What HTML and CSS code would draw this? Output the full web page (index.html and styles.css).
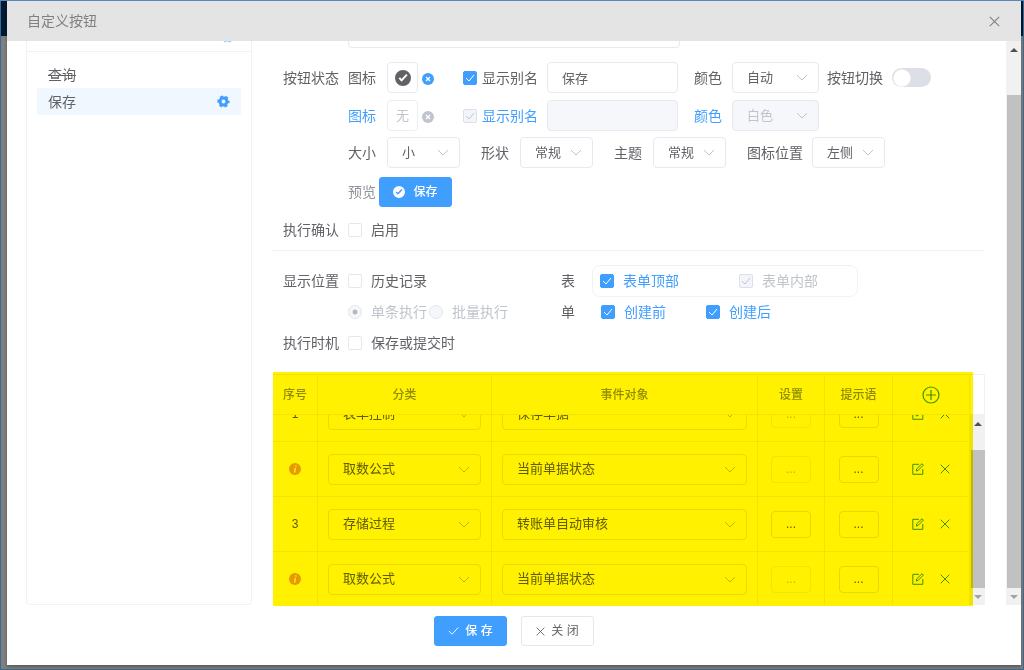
FILE: index.html
```
<!DOCTYPE html>
<html lang="zh-CN">
<head>
<meta charset="utf-8">
<title>自定义按钮</title>
<link rel="stylesheet" href="styles.css">
</head>
<body>
<svg class="defs" aria-hidden="true">
  <symbol id="gear" viewBox="0 0 14 14"><g fill="none" stroke="currentColor"><circle cx="7" cy="7" r="3.700" stroke-width="3.200"/><circle cx="7" cy="7" r="5.700" stroke-width="1.800" stroke-dasharray="3.400 2.570" stroke-dashoffset="1.700"/></g></symbol>
  <symbol id="ok" viewBox="0 0 16 16"><path fill-rule="evenodd" d="M8 0a8 8 0 1 1 0 16A8 8 0 0 1 8 0zM3.600 8.500l3 3.200 6-6.500-1.400-1.200-4.700 5.100-1.500-1.800z"/></symbol>
  <symbol id="clear" viewBox="0 0 12 12"><circle cx="6" cy="6" r="6"/><path d="M4 4l4 4M8 4l-4 4" stroke="#fff" stroke-width="1.300"/></symbol>
  <symbol id="cross" viewBox="0 0 10 10"><path d="M.7.7l8.600 8.600M9.300.7L.7 9.300" fill="none" stroke="currentColor" stroke-width="1"/></symbol>
  <symbol id="edit" viewBox="0 0 12 12"><path d="M7 1.300H.8v10h10V6M4.300 8l.5-2.200L10 .7l1.400 1.400-5.200 5.300z" fill="none" stroke="currentColor" stroke-width="1"/></symbol>
  <symbol id="info" viewBox="0 0 12 12"><circle cx="6" cy="6" r="6" fill="#e6a23c"/><path d="M6.400 4.800L5.500 9.500M7 2.400l-.2 1.200" stroke="#fff" stroke-width="1.500"/></symbol>
  <symbol id="up" viewBox="0 0 8 4"><path d="M0 4L4 0l4 4z"/></symbol>
  <symbol id="down" viewBox="0 0 8 4"><path d="M0 0l4 4 4-4z"/></symbol>
</svg>
<div class="backdrop-nav"></div>
<section class="dialog" role="dialog" aria-labelledby="title">
  <header class="dialog-head">
    <h1 id="title">自定义按钮</h1>
    <button class="icon-btn close" aria-label="关闭对话框"><svg><use href="#cross"/></svg></button>
  </header>

  <div class="dialog-body">
    <aside class="side">
      <div class="side-top"><svg class="gear"><use href="#gear"/></svg></div>
      <ul class="side-list">
        <li class="removed">查询</li>
        <li class="active">保存 <button class="icon-btn" aria-label="设置"><svg class="gear"><use href="#gear"/></svg></button></li>
      </ul>
    </aside>

    <main class="form">
      <div class="clipped"><input class="name" type="text" aria-label="名称"></div>

      <div class="row state">
        <span class="label">按钮状态</span>
        <span class="sub">图标</span>
        <button class="pick" aria-label="选择图标"><svg class="ok"><use href="#ok"/></svg></button>
        <button class="icon-btn clear" aria-label="清除图标"><svg><use href="#clear"/></svg></button>
        <label class="alias"><input type="checkbox" checked>显示别名</label>
        <input class="text" type="text" value="保存" aria-label="别名">
        <label class="sub color" for="color1">颜色</label>
        <select id="color1" class="wide"><option>自动</option></select>
        <label class="switch">按钮切换<input type="checkbox" role="switch"></label>
      </div>

      <div class="row second">
        <span class="label"></span>
        <span class="sub link">图标</span>
        <button class="pick" disabled>无</button>
        <button class="icon-btn clear" disabled aria-label="清除图标"><svg><use href="#clear"/></svg></button>
        <label class="alias link"><input type="checkbox" checked disabled>显示别名</label>
        <input class="text" type="text" disabled aria-label="切换后别名">
        <label class="sub color link" for="color2">颜色</label>
        <select id="color2" class="wide" disabled><option>白色</option></select>
      </div>

      <div class="row third">
        <span class="label"></span>
        <label class="pair"><span>大小</span><select><option>小</option></select></label>
        <label class="pair"><span>形状</span><select><option>常规</option></select></label>
        <label class="pair"><span>主题</span><select><option>常规</option></select></label>
        <label class="pair"><span>图标位置</span><select><option>左侧</option></select></label>
      </div>

      <div class="row preview">
        <span class="label"></span>
        <span class="muted">预览</span>
        <button class="btn primary"><svg class="ok-small"><use href="#ok"/></svg>保存</button>
      </div>

      <div class="row confirm">
        <span class="label">执行确认</span>
        <label class="check"><input type="checkbox">启用</label>
      </div>

      <hr>

      <div class="row place">
        <span class="label">显示位置</span>
        <div class="half"><label class="check"><input type="checkbox">历史记录</label></div>
        <span class="form-tag">表</span>
        <div class="options boxed">
          <label class="check link"><input type="checkbox" checked>表单顶部</label>
          <label class="check off"><input type="checkbox" checked disabled>表单内部</label>
        </div>
      </div>
      <div class="row modes">
        <span class="label"></span>
        <div class="half">
          <label class="check off"><input type="radio" name="mode" checked disabled>单条执行</label>
          <label class="check off"><input type="radio" name="mode" disabled>批量执行</label>
        </div>
        <span class="form-tag">单</span>
        <div class="options created">
          <label class="check link"><input type="checkbox" checked>创建前</label>
          <label class="check link"><input type="checkbox" checked>创建后</label>
        </div>
      </div>
      <div class="row timing">
        <span class="label">执行时机</span>
        <label class="check"><input type="checkbox">保存或提交时</label>
      </div>

      <div class="events">
        <table class="grid-head">
          <colgroup><col class="c1"><col class="c2"><col><col class="c4"><col class="c5"><col class="c6"><col class="c7"></colgroup>
          <thead><tr><th>序号</th><th>分类</th><th>事件对象</th><th>设置</th><th>提示语</th>
            <th><button class="icon-btn green" aria-label="添加"><svg class="plus" viewBox="0 0 18 18"><circle cx="9" cy="9" r="8"/><path d="M9 4v10M4 9h10"/></svg></button></th><th></th></tr></thead>
        </table>
        <div class="grid-body">
          <div class="viewport">
            <table class="scrolled">
              <colgroup><col class="c1"><col class="c2"><col><col class="c4"><col class="c5"><col class="c6"></colgroup>
              <tbody>
                <tr><td>1</td><td><select aria-label="分类"><option>表单控制</option></select></td><td><select aria-label="事件对象"><option>保存单据</option></select></td><td><button class="more" disabled>...</button></td><td><button class="more">...</button></td><td><div class="acts"><button class="icon-btn green" aria-label="编辑"><svg class="edit"><use href="#edit"/></svg></button><button class="icon-btn green" aria-label="删除"><svg class="del"><use href="#cross"/></svg></button></div></td></tr>
                <tr><td><svg class="info"><use href="#info"/></svg></td><td><select aria-label="分类"><option>取数公式</option></select></td><td><select aria-label="事件对象"><option>当前单据状态</option></select></td><td><button class="more" disabled>...</button></td><td><button class="more">...</button></td><td><div class="acts"><button class="icon-btn green" aria-label="编辑"><svg class="edit"><use href="#edit"/></svg></button><button class="icon-btn green" aria-label="删除"><svg class="del"><use href="#cross"/></svg></button></div></td></tr>
                <tr><td>3</td><td><select aria-label="分类"><option>存储过程</option></select></td><td><select aria-label="事件对象"><option>转账单自动审核</option></select></td><td><button class="more">...</button></td><td><button class="more">...</button></td><td><div class="acts"><button class="icon-btn green" aria-label="编辑"><svg class="edit"><use href="#edit"/></svg></button><button class="icon-btn green" aria-label="删除"><svg class="del"><use href="#cross"/></svg></button></div></td></tr>
                <tr><td><svg class="info"><use href="#info"/></svg></td><td><select aria-label="分类"><option>取数公式</option></select></td><td><select aria-label="事件对象"><option>当前单据状态</option></select></td><td><button class="more" disabled>...</button></td><td><button class="more">...</button></td><td><div class="acts"><button class="icon-btn green" aria-label="编辑"><svg class="edit"><use href="#edit"/></svg></button><button class="icon-btn green" aria-label="删除"><svg class="del"><use href="#cross"/></svg></button></div></td></tr>
              </tbody>
            </table>
          </div>
          <div class="scrollbar inner"><svg class="arrow"><use href="#up"/></svg><div class="thumb"></div><svg class="arrow dim"><use href="#down"/></svg></div>
        </div>
        <div class="marker"></div>
      </div>
    </main>

    <div class="scrollbar outer"><svg class="arrow"><use href="#up"/></svg><div class="thumb"></div><svg class="arrow dim"><use href="#down"/></svg></div>
  </div>

  <footer class="dialog-foot">
    <button class="btn primary"><svg class="tick" viewBox="0 0 12 10"><path d="M1 5l3.500 3.500L11.300 1"/></svg>保 存</button>
    <button class="btn"><svg class="x"><use href="#cross"/></svg>关 闭</button>
  </footer>
</section>
</body>
</html>
```

FILE: styles.css
```
* { box-sizing: border-box; }

body {
  margin: 0;
  height: 100vh;
  padding: 1px 3px 5px 7px;
  overflow: hidden;
  position: relative;
  background: #7f7f7f;
  box-shadow: inset 0 1px #5a8abf, inset 0 0 0 1px #3b6a97;
  color: #606266;
  font: 14px/20px "Liberation Sans", "Noto Sans CJK SC", sans-serif;
}

button, input, select { font: inherit; color: inherit; margin: 0; }
svg { display: block; fill: currentColor; flex: none; }
h1, ul { margin: 0; padding: 0; font-weight: normal; }
.defs { position: absolute; width: 0; height: 0; }

.backdrop-nav {
  position: absolute;
  left: 1px;
  top: 1px;
  right: 1px;
  height: 35px;
  background: #001a33;
}

.dialog {
  position: relative;
  display: flex;
  flex-direction: column;
  height: 100%;
  background: #fff;
  box-shadow: 0 2px 3px rgba(0, 0, 0, .3);
}
.dialog-head {
  display: flex;
  align-items: center;
  justify-content: space-between;
  height: 40px;
  flex: none;
  padding: 0 21px 0 20px;
  background: #e4e4e4;
  color: #808080;
}
.dialog-head h1 { font-size: 14px; }
.close svg { width: 11px; height: 11px; }

.dialog-body { display: flex; flex: 1; min-height: 0; padding-left: 19px; }
.dialog-foot { display: flex; flex: none; justify-content: center; gap: 14px; height: 60px; padding-top: 11px; }

/* controls */
.icon-btn { display: inline-flex; padding: 0; border: 0; background: none; }
.green { color: #409a30; }

.btn, .pick, .more, .text, .name, select {
  border: 1px solid #e7e9ee;
  border-radius: 4px;
  background-color: #fff;
}
.btn {
  display: inline-flex;
  align-items: center;
  justify-content: center;
  width: 73px;
  height: 30px;
  padding: 0;
  gap: 6px;
  border-color: #e4e7ed;
  border-radius: 3px;
  font-size: 12px;
}
.btn.primary { border-color: #409eff; background: #409eff; color: #fff; font-weight: 500; }
.preview .btn { gap: 8px; }
.tick { width: 11px; height: 10px; fill: none; stroke: currentColor; stroke-width: 1; }
.x { width: 9px; height: 9px; }
.ok { width: 16px; height: 16px; }
.ok-small { width: 12px; height: 12px; }

select {
  appearance: none;
  width: 73px;
  height: 31px;
  padding: 0 14px;
  font-size: 13px;
  background: #fff url("data:image/svg+xml,%3Csvg xmlns='http://www.w3.org/2000/svg' width='12' height='7'%3E%3Cpath d='M1 1l5 5 5-5' fill='none' stroke='%23c0c4cc'/%3E%3C/svg%3E") no-repeat right 10px center;
}
select:disabled, .text:disabled { background-color: #f5f7fa; color: #c0c4cc; opacity: 1; }
.text { width: 131px; height: 31px; padding: 0 14px; font-size: 13px; }

input[type=checkbox], input[type=radio] {
  appearance: none;
  flex: none;
  width: 14px;
  height: 14px;
  border: 1px solid #e4e7ed;
  border-radius: 2px;
  background: #fff center no-repeat;
}
input[type=checkbox]:checked {
  border-color: #409eff;
  background-color: #409eff;
  background-image: url("data:image/svg+xml,%3Csvg xmlns='http://www.w3.org/2000/svg' width='10' height='8'%3E%3Cpath d='M1 4l3 3 5-6' fill='none' stroke='white'/%3E%3C/svg%3E");
}
input[type=checkbox]:disabled {
  border-color: #dcdfe6;
  background-color: #f2f6fc;
  background-image: url("data:image/svg+xml,%3Csvg xmlns='http://www.w3.org/2000/svg' width='10' height='8'%3E%3Cpath d='M1 4l3 3 5-6' fill='none' stroke='%23c0c4cc'/%3E%3C/svg%3E");
}
input[type=radio] { border-color: #e4e7ed; border-radius: 50%; background-color: #f5f7fa; }
input[type=radio]:checked { background-image: radial-gradient(circle, #b4b8c0 2px, transparent 3px); }

/* side list */
.side {
  display: flex;
  flex-direction: column;
  flex: none;
  width: 226px;
  border: 1px solid #f0f2f6;
  border-top: 0;
  border-radius: 0 0 4px 4px;
}
.side-top { display: flex; justify-content: flex-end; align-items: flex-start; height: 11px; padding-right: 17px; overflow: hidden; border-bottom: 1px solid #f0f2f6; color: #8cc5ff; }
.side-top .gear { margin-top: -11px; }
.gear { width: 13px; height: 13px; }
.side-list { list-style: none; padding: 9px 10px; }
.side-list li { display: flex; align-items: center; justify-content: space-between; height: 27px; padding: 0 11px; }
.side-list .removed { text-decoration: line-through; }
.side-list .active { background: #f0f7ff; }
.side-list button { color: #409eff; }

/* form */
.form { flex: 1; min-width: 0; display: flex; flex-direction: column; margin: 0 21px 0 19px; }
.clipped { display: flex; flex: none; align-items: flex-end; height: 7px; margin-left: 77px; overflow: hidden; }
.name { flex: none; width: 332px; height: 31px; }
.row { display: flex; align-items: center; flex: none; padding-left: 12px; white-space: nowrap; }
.label { flex: none; width: 65px; }
.link { color: #409eff; }
.muted { width: 31px; color: #909399; }
.sub { width: 39px; }
.color { width: 38px; margin-left: 16px; }
.wide { width: 87px; }
.pick { display: flex; align-items: center; justify-content: center; width: 31px; height: 31px; padding: 0; font-size: 13px; }
.pick:disabled { border-color: #ebeef5; color: #c0c4cc; }
.clear { margin: 2px 29px 0 4px; color: #409eff; }
.clear svg { width: 12px; height: 12px; }
.clear:disabled { color: #c0c4cc; }
.alias { display: flex; align-items: center; gap: 5px; width: 84px; }
.switch { display: flex; align-items: center; gap: 9px; margin-left: 8px; }
.switch input[type=checkbox] {
  width: 39px;
  height: 19px;
  border: 0;
  border-radius: 10px;
  background: #dcdfe6 radial-gradient(circle at 10px 10px, #fff 8px, transparent 9px);
}
.state { margin-top: 14px; }
.second { margin-top: 7px; }
.third { margin-top: 6px; gap: 21px; }
.third .label { width: 44px; }
.pair { display: flex; align-items: center; gap: 11px; }
.pair:last-child { gap: 9px; }
.preview { margin-top: 9px; }
.confirm { margin-top: 13px; }
hr { flex: none; width: 100%; margin: 10px 0 0; border: 0; border-top: 1px solid #f0f2f5; }
.place { margin-top: 14px; }
.modes { margin-top: 5px; }
.timing { margin-top: 11px; }
.check { display: flex; align-items: center; gap: 9px; }
.off { color: #c0c4cc; }
.half { display: flex; gap: 2px; width: 213px; }
.form-tag { width: 31px; }
.options { display: flex; padding-left: 7px; width: 266px; gap: 60px; }
.created { gap: 40px; padding-left: 9px; }
.boxed { height: 32px; border: 1px solid #f0f2f5; border-radius: 8px; }

/* event table */
.events { position: relative; display: flex; flex-direction: column; flex: 1; min-height: 0; margin: 21px 0 0 2px; }
table { width: 100%; table-layout: fixed; border-collapse: separate; border-spacing: 0; font-size: 12px; }
.c1 { width: 45px; }
.c2 { width: 174px; }
.c4 { width: 67px; }
.c5 { width: 68px; }
.c6 { width: 77px; }
.c7 { width: 15px; }
th, td { padding: 0; text-align: center; border: 0 solid #f0f2f5; border-width: 0 1px 1px 0; }
th { height: 41px; border-top-width: 1px; color: #909399; font-weight: 500; }
td { height: 55px; }
td select { display: block; width: calc(100% - 20px); margin: 0 auto; }
.grid-body { display: flex; flex: 1; min-height: 0; }
.viewport { flex: 1; overflow: hidden; }
.scrolled { margin-top: -28px; }
.more { width: 40px; height: 27px; padding: 0; border-color: #e4e7ed; }
.more:disabled { border-color: #f0f2f5; color: #c0c4cc; }
.plus { width: 18px; height: 18px; fill: none; stroke: currentColor; stroke-width: 1.200; }
th .icon-btn { vertical-align: middle; }
.acts { display: flex; justify-content: center; align-items: center; gap: 16px; }
.edit { width: 12px; height: 12px; }
.del { width: 10px; height: 10px; }
.info { width: 12px; height: 12px; margin: 0 auto; }
.marker {
  position: absolute;
  inset: -2px 12px -1px 0;
  background: #fff100;
  mix-blend-mode: multiply;
  pointer-events: none;
}

/* scrollbars */
.scrollbar { display: flex; flex-direction: column; align-items: center; flex: none; width: 15px; padding: 7px 0 6px; gap: 7px; background: #f1f1f1; color: #505050; }
.scrollbar .thumb { flex: 1; width: 14px; background: #c1c1c1; }
.inner .thumb { margin-top: 17px; }
.outer .thumb { margin-top: 36px; }
.arrow { width: 8px; height: 4px; }
.dim { color: #a3a3a3; }
```
